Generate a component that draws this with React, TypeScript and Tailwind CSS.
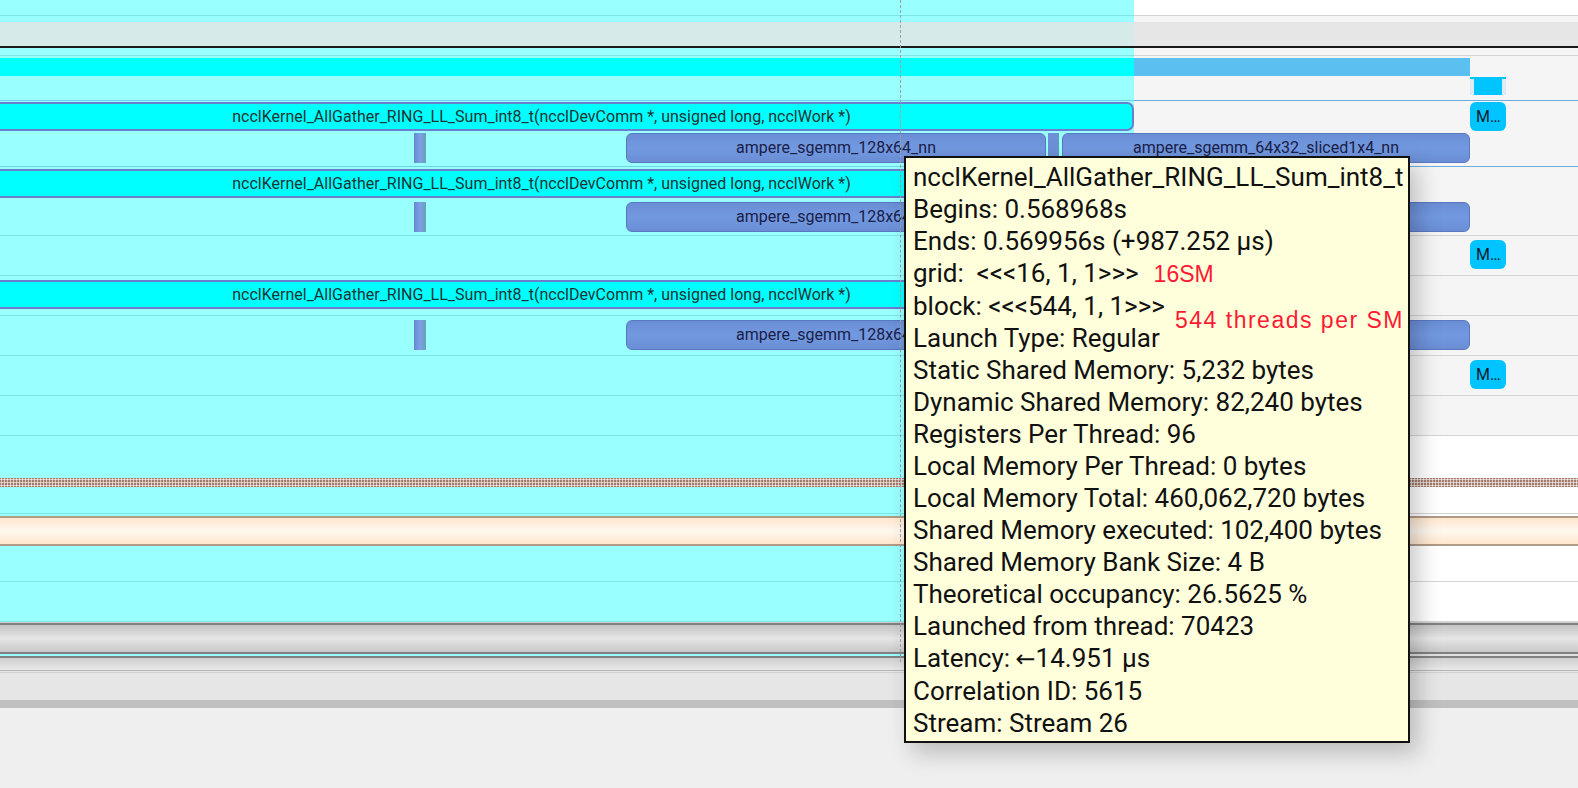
import type { ReactNode } from "react";

type RowProps = {
  h: string;
  left: string;
  right: string;
  children?: ReactNode;
};

// one track of the timeline: selected part on the left, plain part on the right
function Row({ h, left, right, children }: RowProps) {
  return (
    <div className={`relative flex shrink-0 ${h}`}>
      <div className={`w-[1134px] shrink-0 ${left}`} />
      <div className={`flex-1 ${right}`} />
      {children}
    </div>
  );
}

function NcclBar({ top }: { top: string }) {
  return (
    <div
      className={`absolute left-[-51px] w-[1185px] h-[29px] ${top} rounded-r-[7px] border-2 border-[#6a80cc] bg-[#00ffff] flex items-center justify-center text-[16px] text-[#1d3434] whitespace-nowrap overflow-hidden`}
    >
      ncclKernel_AllGather_RING_LL_Sum_int8_t(ncclDevComm *, unsigned long, ncclWork *)
    </div>
  );
}

function Ampere({ top, left, width, label }: { top: string; left: string; width: string; label?: string }) {
  return (
    <div
      className={`absolute h-[30px] ${top} ${left} ${width} rounded-[6px] border border-[#5a78c0] bg-linear-to-b from-[#6a8ed6] via-[#7299e0] to-[#6a8ed6] flex items-center justify-center text-[16px] text-[#1a2048] whitespace-nowrap overflow-hidden`}
    >
      {label}
    </div>
  );
}

function Tick({ top }: { top: string }) {
  return (
    <div className={`absolute left-[414px] w-[12px] h-[30px] ${top} bg-linear-to-r from-[#6888cc] via-[#7aa0e8] to-[#6aa0b4]`} />
  );
}

// the pair of sgemm kernels on a compute track
function SgemmPair({ top, second }: { top: string; second?: string }) {
  return (
    <>
      <Tick top={top} />
      <Ampere top={top} left="left-[626px]" width="w-[420px]" label="ampere_sgemm_128x64_nn" />
      <div className={`absolute left-[1048px] ${top} h-[29px] w-[11px] bg-[#6c90d6] border-r border-[#62a0a8]`} />
      <Ampere top={top} left="left-[1062px]" width="w-[408px]" label={second} />
    </>
  );
}

function MChip({ top }: { top: string }) {
  return (
    <div
      className={`absolute left-[1470px] w-[36px] h-[29px] ${top} rounded-[6px] bg-[#00c4ff] flex items-center pl-[6px] text-[16px] text-[#10202c]`}
    >
      M…
    </div>
  );
}

const LINES = [
  "Begins: 0.568968s",
  "Ends: 0.569956s (+987.252 μs)",
];

const LINES2 = [
  "block: <<<544, 1, 1>>>",
  "Launch Type: Regular",
  "Static Shared Memory: 5,232 bytes",
  "Dynamic Shared Memory: 82,240 bytes",
  "Registers Per Thread: 96",
  "Local Memory Per Thread: 0 bytes",
  "Local Memory Total: 460,062,720 bytes",
  "Shared Memory executed: 102,400 bytes",
  "Shared Memory Bank Size: 4 B",
  "Theoretical occupancy: 26.5625 %",
  "Launched from thread: 70423",
];

const LINES3 = ["Correlation ID: 5615", "Stream: Stream 26"];

function Tooltip() {
  return (
    <div className="absolute left-[904px] top-[156px] w-[506px] h-[587px] border-2 border-[#111] bg-[#ffffdc] pl-[7px] pt-[3px] text-[26px] leading-[32px] text-[#111] shadow-[8px_10px_22px_rgba(0,0,0,0.22)] whitespace-pre">
      <div>ncclKernel_AllGather_RING_LL_Sum_int8_t</div>
      {LINES.map((l) => (
        <div key={l}>{l}</div>
      ))}
      <div>
        {"grid:  <<<16, 1, 1>>>"}
        <span className="ml-[15px] text-[23px] text-[#ff1a33] font-['Liberation_Sans',sans-serif]">16SM</span>
      </div>
      {LINES2.map((l) => (
        <div key={l}>{l}</div>
      ))}
      <div>
        {"Latency: "}
        <span className="-ml-[1px] text-[24px] font-['DejaVu_Sans',sans-serif]">←</span>
        {"14.951 μs"}
      </div>
      {LINES3.map((l) => (
        <div key={l}>{l}</div>
      ))}
      <div className="absolute left-[269px] top-[146px] text-[23px] leading-[32px] tracking-[1.5px] text-[#ff1a33] font-['Liberation_Sans',sans-serif]">
        544 threads per SM
      </div>
    </div>
  );
}

export default function App() {
  return (
    <div className="relative w-[1578px] h-[788px] overflow-hidden flex flex-col bg-[#efefef] font-['Roboto',sans-serif]">
      <Row h="h-[16px]" left="bg-[#99ffff] border-b border-[#7fe4e4]" right="bg-white border-b border-[#d4d4d4]" />
      <Row h="h-[6px]" left="bg-[#99ffff]" right="bg-[#f5f5f5]" />
      <Row h="h-[24px]" left="bg-[#d6eaea]" right="bg-[#e6e6e6]" />
      <div className="h-[2px] shrink-0 bg-[#1a1a1a]" />
      <Row h="h-[8px]" left="bg-[#99ffff] border-b border-[#7fe4e4]" right="bg-[#f5f5f5] border-b border-[#d4d4d4]" />
      <Row h="h-[45px]" left="bg-[#99ffff] border-b border-[#6fd4e4]" right="bg-[#f5f5f5] border-b border-[#6aaee0]">
        <div className="absolute left-0 top-[2px] h-[18px] w-[1134px] bg-[#00ffff]" />
        <div className="absolute left-[1134px] top-[2px] h-[18px] w-[336px] bg-[#5bbff0]" />
        <div className="absolute left-[1470px] top-[21px] h-[2px] w-[36px] bg-[#00c4ff]" />
        <div className="absolute left-[1470px] top-[23px] h-[16px] w-[36px] bg-[#dcecf2] px-[4px]">
          <div className="h-full bg-[#00c4ff]" />
        </div>
      </Row>
      {/* track 1 */}
      <Row h="h-[30px]" left="bg-[#99ffff]" right="bg-[#f5f5f5]">
        <NcclBar top="top-[1px]" />
        <MChip top="top-[1px]" />
      </Row>
      <Row h="h-[36px]" left="bg-[#99ffff] border-b border-[#6fd4e4]" right="bg-[#f5f5f5] border-b border-[#6aaee0]">
        <SgemmPair top="top-[2px]" second="ampere_sgemm_64x32_sliced1x4_nn" />
      </Row>
      {/* track 2 */}
      <Row h="h-[32px]" left="bg-[#99ffff]" right="bg-[#f5f5f5]">
        <NcclBar top="top-[2px]" />
      </Row>
      <Row h="h-[37px]" left="bg-[#99ffff] border-b border-[#7fe4e4]" right="bg-[#f5f5f5] border-b border-[#d4d4d4]">
        <SgemmPair top="top-[3px]" />
      </Row>
      <Row h="h-[40px]" left="bg-[#99ffff] border-b border-[#7fe4e4]" right="bg-[#f5f5f5] border-b border-[#d4d4d4]">
        <MChip top="top-[4px]" />
      </Row>
      {/* track 3 */}
      <Row h="h-[40px]" left="bg-[#99ffff] border-b border-[#7fe4e4]" right="bg-[#f5f5f5] border-b border-[#d4d4d4]">
        <NcclBar top="top-[4px]" />
      </Row>
      <Row h="h-[40px]" left="bg-[#99ffff] border-b border-[#7fe4e4]" right="bg-[#f5f5f5] border-b border-[#d4d4d4]">
        <SgemmPair top="top-[4px]" />
      </Row>
      <Row h="h-[40px]" left="bg-[#99ffff] border-b border-[#7fe4e4]" right="bg-[#f5f5f5] border-b border-[#d4d4d4]">
        <MChip top="top-[4px]" />
      </Row>
      <Row h="h-[40px]" left="bg-[#99ffff] border-b border-[#7fe4e4]" right="bg-[#f5f5f5] border-b border-[#d4d4d4]" />
      <Row h="h-[42px]" left="bg-[#99ffff]" right="bg-white" />
      <div className="h-[9px] shrink-0 bg-[#a27c6e] bg-[radial-gradient(circle,#f2ebe6_0.9px,transparent_1.2px)] bg-[length:3px_3px] bg-size-[3px_3px]" />
      <Row h="h-[27px]" left="bg-[#99ffff] border-b border-[#7fe4e4]" right="bg-white border-b border-[#d4d4d4]" />
      <Row h="h-[2px]" left="bg-[#99ffff]" right="bg-white" />
      <div className="h-[30px] shrink-0 border-y-2 border-[#b09a88] bg-linear-to-b from-[#ffe6cc] via-[#fff8f0] to-[#ffe6cc]" />
      <Row h="h-[36px]" left="bg-[#99ffff] border-b border-[#7fe4e4]" right="bg-white border-b border-[#d4d4d4]" />
      <Row h="h-[40px]" left="bg-[#99ffff] border-b border-[#7fe4e4]" right="bg-white border-b border-[#d4d4d4]" />
      <div className="h-[1px] shrink-0 bg-[#d0d0d0]" />
      <div className="h-[31px] shrink-0 border-y-2 border-[#808080] bg-linear-to-b from-[#c4c4c4] via-[#e6e6e6] to-[#c8c8c8]" />
      <Row h="h-[2px]" left="bg-[#99ffff]" right="bg-[#e0e0e0]" />
      <div className="h-[2px] shrink-0 bg-[#808080]" />
      <div className="h-[12px] shrink-0 bg-linear-to-b from-[#d0d0d0] to-[#e8e8e8]" />
      <div className="h-[3px] shrink-0 border-t border-b border-t-[#b4b4b4] border-b-[#d0d0d0] bg-[#e8e8e8]" />
      <div className="h-[27px] shrink-0 bg-[#e6e6e6]" />
      <div className="h-[8px] shrink-0 bg-[#c0c0c0]" />
      <div className="flex-1 bg-[#efefef]" />

      {/* cursor line */}
      <div className="absolute left-[900px] top-0 h-[662px] border-l border-dashed border-[#a0a0a0]" />
      <Tooltip />
    </div>
  );
}
